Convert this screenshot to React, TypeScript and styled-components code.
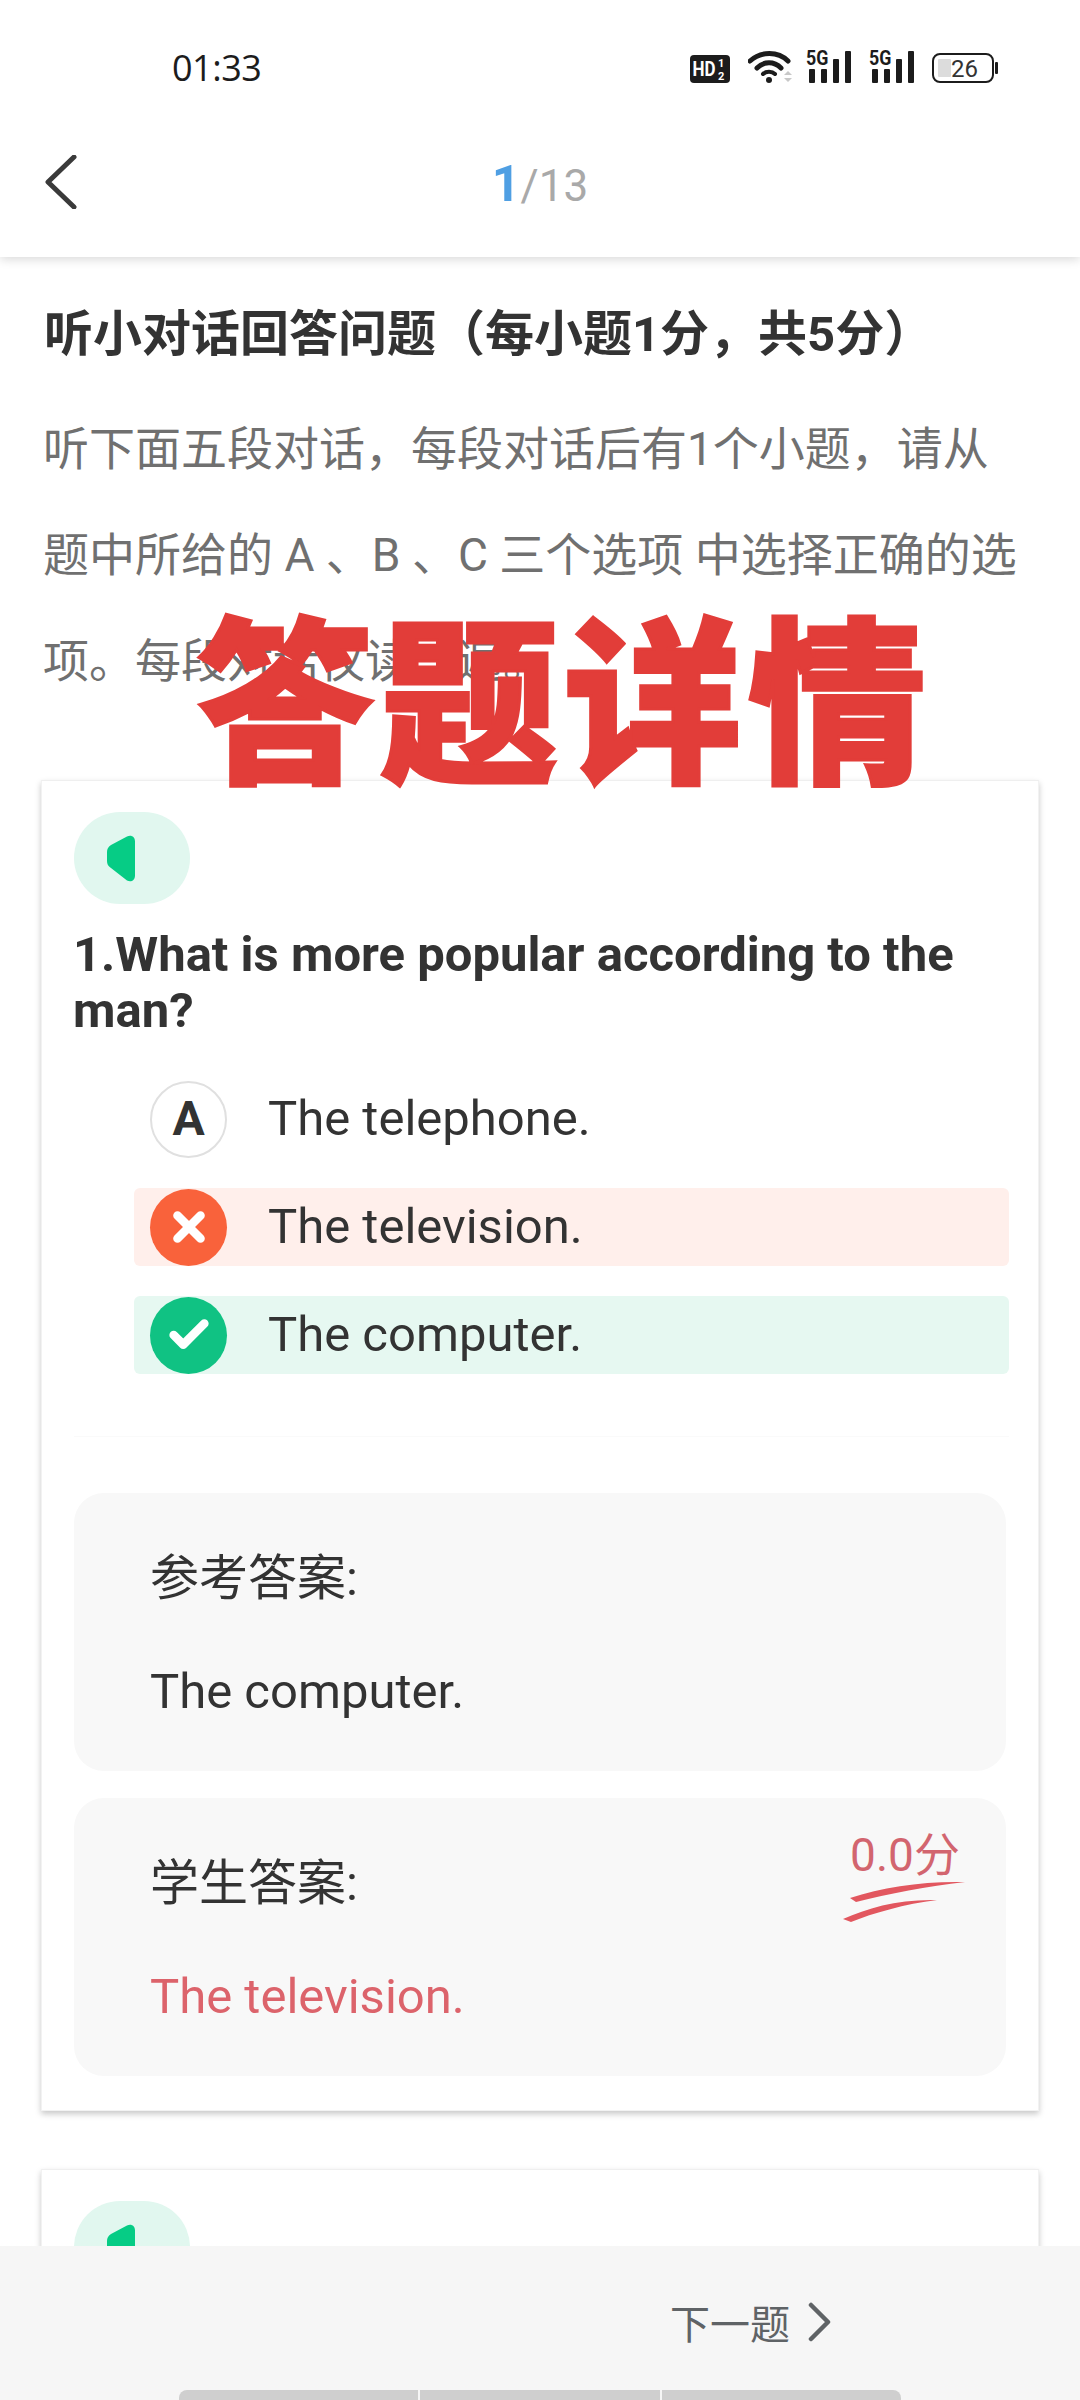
import styled, { createGlobalStyle } from 'styled-components';
import { Check, X } from 'lucide-react';

const GlobalStyle = createGlobalStyle`
  html, body {
    margin: 0;
    padding: 0;
    background: #fff;
    font-family: Roboto, "Noto Sans CJK SC", sans-serif;
  }
  * { box-sizing: border-box; }
`;

const Screen = styled.div`
  position: relative;
  width: 1080px;
  height: 2400px;
  display: flex;
  flex-direction: column;
  overflow: hidden;
  background: #fff;
`;

const Header = styled.header`
  height: 257px;
  flex: none;
  display: flex;
  flex-direction: column;
  background: #fff;
  box-shadow: 0 2px 10px rgba(0, 0, 0, 0.16);
  z-index: 1;
`;

const StatusBar = styled.div`
  height: 130px;
  padding: 50px 82px 0 172px;
  display: flex;
  justify-content: space-between;
  align-items: flex-start;
`;

const Time = styled.span`
  font: 400 36px/36px "Open Sans", sans-serif;
  letter-spacing: -0.5px;
  color: #1c1c1c;
`;

const StatusIcons = styled.div`
  display: flex;
  align-items: flex-start;
`;

const NavBar = styled.nav`
  position: relative;
  flex: 1;
  display: flex;
  align-items: center;
  justify-content: center;
  padding-bottom: 20px;
`;

const BackIcon = styled.svg`
  position: absolute;
  left: 44px;
  top: 25px;
`;

const Counter = styled.div`
  font: 400 44px/1 Roboto, sans-serif;
  color: #a9a9a9;
  b {
    font-size: 50px;
    font-weight: 700;
    color: #4f9fe3;
  }
`;

const Content = styled.main`
  flex: 1;
  min-height: 0;
  overflow: hidden;
  padding: 49px 41px 0;
`;

const Title = styled.h1`
  margin: 0 0 0 3px;
  font: 700 49px/58px Roboto, "Noto Sans CJK SC", sans-serif;
  color: #333;
`;

const Intro = styled.p`
  margin: 32px 0 66px 2px;
  width: 985px;
  font: 400 46px/106px Roboto, "Noto Sans CJK SC", sans-serif;
  color: #707070;
`;

const Card = styled.section`
  background: #fff;
  border: 1px solid #f2f2f2;
  border-top-color: #efefef;
  box-shadow: 0 3px 6px rgba(0, 0, 0, 0.22);
  padding: 31px 32px 34px;
  margin-bottom: 58px;
`;

const AudioPill = styled.div`
  width: 116px;
  height: 92px;
  border-radius: 46px;
  background: #e1f7ef;
  display: flex;
  align-items: center;
  padding-left: 33px;
`;

const Question = styled.h2`
  margin: 23px 0 41px -1px;
  font: 700 49px/56px Roboto, sans-serif;
  color: #333;
`;

const Options = styled.div`
  display: flex;
  flex-direction: column;
  gap: 30px;
  margin-right: -3px;
  padding: 0 0 62px 60px;
  border-bottom: 1px solid #fafafa;
  margin-bottom: 56px;
`;

const OptionRow = styled.div<{ $state?: 'wrong' | 'right' }>`
  height: 78px;
  display: flex;
  align-items: center;
  gap: 41px;
  padding-left: 16px;
  border-radius: 6px;
  font: 400 49px/78px Roboto, sans-serif;
  color: #333;
  background: ${({ $state }) =>
    $state === 'wrong' ? '#ffefeb' : $state === 'right' ? '#e6f8f1' : 'transparent'};
`;

const OptionMark = styled.div<{ $state?: 'wrong' | 'right' }>`
  width: 77px;
  height: 77px;
  flex: none;
  border-radius: 50%;
  display: flex;
  align-items: center;
  justify-content: center;
  font: 700 48px/1 Roboto, sans-serif;
  color: ${({ $state }) => ($state ? '#fff' : '#333')};
  border: ${({ $state }) => ($state ? 'none' : '2px solid #e0e0e0')};
  background: ${({ $state }) =>
    $state === 'wrong' ? '#f9623b' : $state === 'right' ? '#10c283' : '#fff'};
`;

const AnswerPanel = styled.div`
  position: relative;
  height: 278px;
  padding: 57px 76px 0;
  margin-bottom: 27px;
  border-radius: 30px;
  background: #f8f8f8;
  &:last-child {
    margin-bottom: 0;
  }
`;

const AnswerLabel = styled.div`
  font: 400 49px/58px Roboto, "Noto Sans CJK SC", sans-serif;
  color: #333;
`;

const AnswerText = styled.div<{ $wrong?: boolean }>`
  margin-top: 55px;
  font: 400 49px/58px Roboto, sans-serif;
  color: ${({ $wrong }) => ($wrong ? '#dc636b' : '#333')};
`;

const Score = styled.div`
  position: absolute;
  top: 31px;
  right: 39px;
  width: 124px;
  text-align: center;
  font: 400 46px/52px Roboto, "Noto Sans CJK SC", sans-serif;
  color: #d2656f;
  svg {
    display: block;
  }
`;

const Footer = styled.footer`
  height: 154px;
  flex: none;
  background: #f6f6f6;
  display: flex;
  flex-direction: column;
  align-items: center;
  z-index: 1;
`;

const NextButton = styled.div`
  align-self: flex-end;
  margin: 52px 248px 0 0;
  display: flex;
  align-items: center;
  gap: 18px;
  font: 400 40px/48px "Noto Sans CJK SC", sans-serif;
  color: #5f6366;
`;

const NavHandle = styled.div`
  margin-top: auto;
  width: 722px;
  height: 10px;
  display: flex;
  gap: 2px;
  overflow: hidden;
  border-radius: 8px 8px 0 0;
`;

const HandleSegment = styled.span`
  flex: 1;
  background: #cfcfcf;
`;

const Stamp = styled.div`
  position: absolute;
  left: 196px;
  top: 587px;
  font: 900 178px/210px "Noto Sans CJK SC", sans-serif;
  letter-spacing: 6px;
  white-space: nowrap;
  color: #e23d39;
  -webkit-text-stroke: 3px #e23d39;
  z-index: 2;
`;

const SignalIcon = () => (
  <svg width="46" height="42" viewBox="0 -8 46 42" style={{ marginTop: -8, marginRight: 17 }}>
    <text x="0" y="15" fontFamily="Roboto" fontWeight="700" fontSize="21" fill="#1c1c1c" transform="scale(0.85 1)">5G</text>
    <rect x="3" y="19" width="6" height="14" rx="1" fill="#1c1c1c" />
    <rect x="15" y="19" width="6" height="14" rx="1" fill="#1c1c1c" />
    <rect x="27" y="9" width="6" height="24" rx="1" fill="#1c1c1c" />
    <rect x="39" y="1" width="6" height="32" rx="1" fill="#1c1c1c" />
  </svg>
);

const SpeakerIcon = () => (
  <svg width="28" height="47" viewBox="0 0 28 47">
    <path d="M20 1.5c4-2 8 0 8 5v34c0 5-4 7-8 5L4 33c-3-2-4-4-4-7v-9c0-3 1-5 4-7z" fill="#06cc85" />
  </svg>
);

export default function App() {
  return (
    <Screen>
      <GlobalStyle />
      <Header>
        <StatusBar>
          <Time>01:33</Time>
          <StatusIcons>
            <svg width="40" height="28" viewBox="0 0 40 28" style={{ marginTop: 5, marginRight: 18 }}>
              <rect width="40" height="28" rx="4" fill="#1c1c1c" />
              <text x="3" y="21" fontFamily="Roboto" fontWeight="700" fontSize="20" fill="#fff" transform="scale(0.85 1)">HD</text>
              <text x="28" y="12" fontFamily="Roboto" fontWeight="700" fontSize="11" fill="#fff">1</text>
              <text x="28" y="25" fontFamily="Roboto" fontWeight="700" fontSize="11" fill="#fff">2</text>
            </svg>
            <svg width="58" height="34" viewBox="0 0 58 34">
              <path d="M2 11C13 1 30 1 40 11" fill="none" stroke="#1c1c1c" strokeWidth="5" strokeLinecap="round" />
              <path d="M9 18C16 11 26 11 33 18" fill="none" stroke="#1c1c1c" strokeWidth="5" strokeLinecap="round" />
              <path d="M15 24C18 21 24 21 27 24" fill="none" stroke="#1c1c1c" strokeWidth="4" strokeLinecap="round" />
              <circle cx="21" cy="30" r="3" fill="#1c1c1c" />
              <path d="M36 25l4-4 4 4zM36 28h8l-4 4z" fill="#c8c8c8" />
            </svg>
            <SignalIcon />
            <SignalIcon />
            <svg width="66" height="32" viewBox="0 0 66 32" style={{ marginTop: 3 }}>
              <rect x="1" y="1" width="60" height="28" rx="7" fill="#fff" stroke="#1c1c1c" strokeWidth="2" />
              <rect x="6" y="6" width="13" height="18" rx="1" fill="#dcdcdc" />
              <text x="19" y="24" fontFamily="Roboto" fontSize="24" fill="#333">26</text>
              <rect x="63" y="9" width="3" height="12" rx="1" fill="#1c1c1c" />
            </svg>
          </StatusIcons>
        </StatusBar>
        <NavBar>
          <BackIcon width="34" height="54" viewBox="0 0 34 54">
            <path d="M30 2L4 27l26 25" fill="none" stroke="#3a3a3a" strokeWidth="5" strokeLinecap="round" strokeLinejoin="round" />
          </BackIcon>
          <Counter>
            <b>1</b>/13
          </Counter>
        </NavBar>
      </Header>

      <Content>
        <Title>听小对话回答问题（每小题1分，共5分）</Title>
        <Intro>听下面五段对话，每段对话后有1个小题，请从题中所给的 A 、B 、C 三个选项 中选择正确的选项。每段对话仅读一遍。</Intro>
        <Card>
          <AudioPill>
            <SpeakerIcon />
          </AudioPill>
          <Question>1.What is more popular according to the man?</Question>
          <Options>
            <OptionRow>
              <OptionMark>A</OptionMark>
              The telephone.
            </OptionRow>
            <OptionRow $state="wrong">
              <OptionMark $state="wrong">
                <X size={46} strokeWidth={4.5} />
              </OptionMark>
              The television.
            </OptionRow>
            <OptionRow $state="right">
              <OptionMark $state="right">
                <Check size={46} strokeWidth={4.5} />
              </OptionMark>
              The computer.
            </OptionRow>
          </Options>
          <AnswerPanel>
            <AnswerLabel>参考答案:</AnswerLabel>
            <AnswerText>The computer.</AnswerText>
          </AnswerPanel>
          <AnswerPanel>
            <AnswerLabel>学生答案:</AnswerLabel>
            <AnswerText $wrong>The television.</AnswerText>
            <Score>
              0.0分
              <svg width="124" height="42" viewBox="0 0 124 42">
                <path d="M7 17C40 6 80 0 122 1C85 5 45 13 13 21z" fill="#e2575f" />
                <path d="M0 38C25 27 55 18 94 19C62 23 30 32 8 41z" fill="#e2575f" />
              </svg>
            </Score>
          </AnswerPanel>
        </Card>
        <Card>
          <AudioPill>
            <SpeakerIcon />
          </AudioPill>
        </Card>
      </Content>

      <Footer>
        <NextButton>
          下一题
          <svg width="24" height="40" viewBox="0 0 24 40">
            <path d="M3 3l17 17L3 37" fill="none" stroke="#5f6366" strokeWidth="4.5" strokeLinecap="round" strokeLinejoin="round" />
          </svg>
        </NextButton>
        <NavHandle>
          <HandleSegment />
          <HandleSegment />
          <HandleSegment />
        </NavHandle>
      </Footer>

      <Stamp>答题详情</Stamp>
    </Screen>
  );
}
